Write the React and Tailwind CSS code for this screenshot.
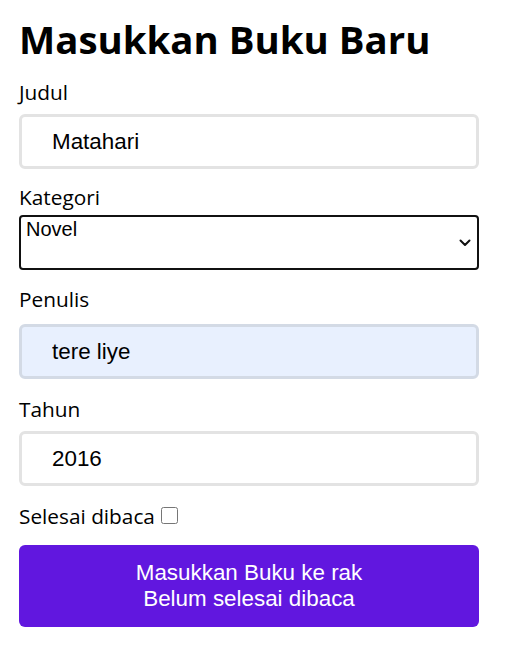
import React, { useState } from 'react';

const labelClass = "block text-[20.8px] leading-[27px] text-black";
const inputClass =
  "block w-full h-[55px] rounded-[6px] border-[3px] border-[#e3e3e3] bg-white pl-[30px] pr-3 text-[22.4px] text-black outline-none font-['Liberation_Sans',Arial,sans-serif]";

const App = () => {
  const [judul, setJudul] = useState('Matahari');
  const [kategori, setKategori] = useState('Novel');
  const [penulis, setPenulis] = useState('tere liye');
  const [tahun, setTahun] = useState('2016');
  const [selesai, setSelesai] = useState(false);

  return (
    <div className="min-h-screen bg-white font-['Open_Sans',sans-serif]">
      <form
        className="w-[460px] ml-[19px] pt-[13px] flex flex-col"
        onSubmit={(e) => e.preventDefault()}
      >
        <h1 className="text-[38.4px] leading-[52px] font-bold text-black">Masukkan Buku Baru</h1>

        <label htmlFor="judul" className={`${labelClass} mt-[14px]`}>Judul</label>
        <input
          id="judul"
          type="text"
          value={judul}
          onChange={(e) => setJudul(e.target.value)}
          className={`${inputClass} mt-[8px]`}
        />

        <label htmlFor="kategori" className={`${labelClass} mt-[15px]`}>Kategori</label>
        <div className="relative mt-[4px]">
          <select
            id="kategori"
            value={kategori}
            onChange={(e) => setKategori(e.target.value)}
            className="block w-full h-[55px] appearance-none rounded-[4px] border-2 border-[#111] bg-white pl-[5px] pt-[1px] pb-[28px] text-[20px] leading-[22px] text-black outline-none font-['Liberation_Sans',Arial,sans-serif]"
          >
            <option>Novel</option>
            <option>Komik</option>
            <option>Biografi</option>
          </select>
          <svg
            className="pointer-events-none absolute right-[8px] top-[24px]"
            width="12"
            height="8"
            viewBox="0 0 12 8"
            fill="none"
          >
            <path d="M1.5 1.5 L6 6 L10.5 1.5" stroke="#111" strokeWidth="2" strokeLinecap="round" strokeLinejoin="round" />
          </svg>
        </div>

        <label htmlFor="penulis" className={`${labelClass} mt-[16px]`}>Penulis</label>
        <input
          id="penulis"
          type="text"
          value={penulis}
          onChange={(e) => setPenulis(e.target.value)}
          className={`${inputClass} mt-[11px] !bg-[#e8f0fe] !border-[#d3dae5]`}
        />

        <label htmlFor="tahun" className={`${labelClass} mt-[17px]`}>Tahun</label>
        <input
          id="tahun"
          type="number"
          value={tahun}
          onChange={(e) => setTahun(e.target.value)}
          className={`${inputClass} mt-[8px] [appearance:textfield] [&::-webkit-inner-spin-button]:appearance-none`}
        />

        <label className="mt-[17px] flex items-center gap-[6px] text-[20.8px] leading-[27px] text-black">
          Selesai dibaca
          <input
            type="checkbox"
            checked={selesai}
            onChange={(e) => setSelesai(e.target.checked)}
            className="w-[17px] h-[17px] m-0 mb-[3px]"
          />
        </label>

        <button
          type="submit"
          className="mt-[15px] h-[82px] w-full rounded-[6px] bg-[#6117df] text-white text-[22.4px] leading-[26px] font-['Liberation_Sans',Arial,sans-serif]"
        >
          Masukkan Buku ke rak
          <br />
          {selesai ? 'Selesai dibaca' : 'Belum selesai dibaca'}
        </button>
      </form>
    </div>
  );
};

export default App;
